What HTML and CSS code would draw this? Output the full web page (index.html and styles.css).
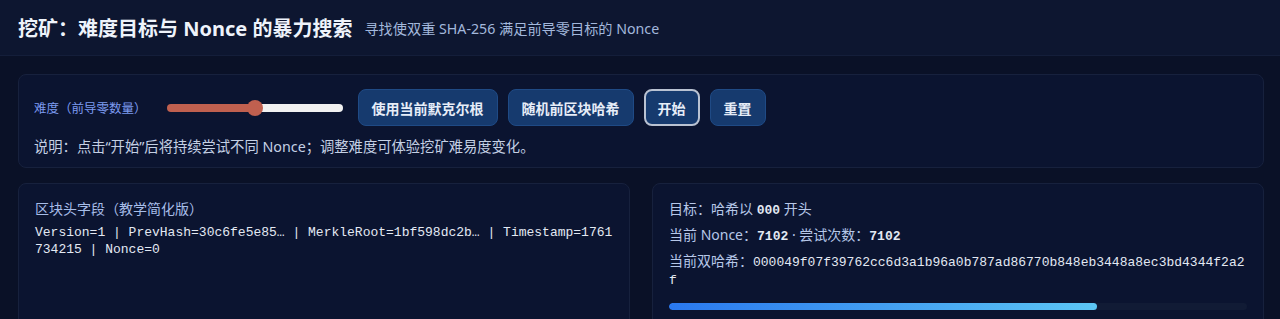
FILE: index.html
```html
<!DOCTYPE html>
<html lang="zh-CN">
<head>
    <meta charset="UTF-8">
    <title>挖矿：难度目标与 Nonce 的暴力搜索</title>
    <link rel="stylesheet" href="styles.css">
</head>
<body>
<header class="topbar">
    <h1>挖矿：难度目标与 Nonce 的暴力搜索</h1>
    <span class="subtitle">寻找使双重 SHA-256 满足前导零目标的 Nonce</span>
</header>
<main class="page">
    <section class="card controls">
        <div class="control-row">
            <label for="difficulty" class="diff-label">难度（前导零数量）</label>
            <input type="range" id="difficulty" class="slider" min="1" max="5" value="3">
            <div class="btn-group">
                <button type="button">使用当前默克尔根</button>
                <button type="button">随机前区块哈希</button>
                <button type="button" class="active">开始</button>
                <button type="button">重置</button>
            </div>
        </div>
        <p class="note">说明：点击“开始”后将持续尝试不同 Nonce；调整难度可体验挖矿难易度变化。</p>
    </section>
    <div class="columns">
        <section class="card">
            <div class="card-title">区块头字段（教学简化版）</div>
            <div class="mono header-fields">Version=1 | PrevHash=30c6fe5e85… | MerkleRoot=1bf598dc2b… | Timestamp=1761734215 | Nonce=0</div>
        </section>
        <section class="card status">
            <div class="line">目标：哈希以 <span class="mono val">000</span> 开头</div>
            <div class="line">当前 Nonce：<span class="mono val">7102</span> · 尝试次数：<span class="mono val">7102</span></div>
            <div class="line hash-line">当前双哈希：<span class="mono">000049f07f39762cc6d3a1b96a0b787ad86770b848eb3448a8ec3bd4344f2a2f</span></div>
            <div class="progress"><div class="progress-fill" style="width: 74%"></div></div>
        </section>
    </div>
</main>
</body>
</html>
```

FILE: styles.css
```css
body { margin: 0; background: #0a1127; color: #dfe7f4; font-family: "Noto Sans", "Noto Sans CJK SC", sans-serif; height: 319px; overflow: hidden; }
.topbar { height: 56px; display: flex; align-items: center; gap: 12px; padding: 0 18px; background: #0d1630; border-bottom: 1px solid #141e3a; box-sizing: border-box; }
.topbar h1 { margin: 0; font-size: 20px; font-weight: 700; color: #eef3fb; }
.subtitle { font-size: 14.2px; color: #a3b8dc; }
.page { padding: 18px 16px 0 18px; }
.card { background: #0b1430; border: 1px solid #17213d; border-radius: 8px; padding: 14px 16px; }
.controls { padding: 14px 15px 10px; }
.control-row { display: flex; align-items: center; gap: 10px; }
.diff-label { font-size: 12.5px; color: #7d9bf0; margin-right: 10px; }
.slider { -webkit-appearance: none; appearance: none; width: 176px; height: 8px; margin: 0 5px 0 0; border-radius: 4px; background: linear-gradient(to right, #c0604f 50%, #f1f1f1 50%); outline: none; }
.slider::-webkit-slider-thumb { -webkit-appearance: none; width: 16px; height: 16px; border-radius: 50%; background: #c0604f; border: none; }
.btn-group { display: flex; gap: 10px; }
.btn-group button { height: 37px; padding: 0 13px; background: #163a6e; color: #e6edf8; border: 1px solid #1f4a85; border-radius: 8px; font-family: inherit; font-size: 14px; font-weight: 700; cursor: pointer; }
.btn-group button.active { border: 2px solid #b9c2d2; padding: 0 12px; }
.note { margin: 11px 0 0; font-size: 14.3px; line-height: 20px; color: #c4d0e4; }
.columns { display: grid; grid-template-columns: 1fr 1fr; gap: 22px; margin-top: 15px; }
.columns .card { height: 140px; padding-top: 16px; }
.card-title { font-size: 14px; line-height: 18px; color: #a7bde8; margin-bottom: 6px; }
.mono { font-family: "Liberation Mono", "DejaVu Sans Mono", monospace; font-size: 13px; }
.header-fields { line-height: 17px; color: #e3e9f3; word-break: break-all; }
.status .line { font-size: 14px; line-height: 18px; color: #b6c7e8; margin-bottom: 8px; word-break: break-all; }
.status .line .mono { line-height: 1; }
.status .val { font-weight: 700; color: #e3e9f3; }
.hash-line .mono { color: #e3e9f3; }
.progress { height: 7px; background: #111b35; border-radius: 4px; margin-top: 15px; overflow: hidden; }
.progress-fill { height: 100%; background: linear-gradient(to right, #2a78ee, #5cc6f4); border-radius: 4px; }
```
